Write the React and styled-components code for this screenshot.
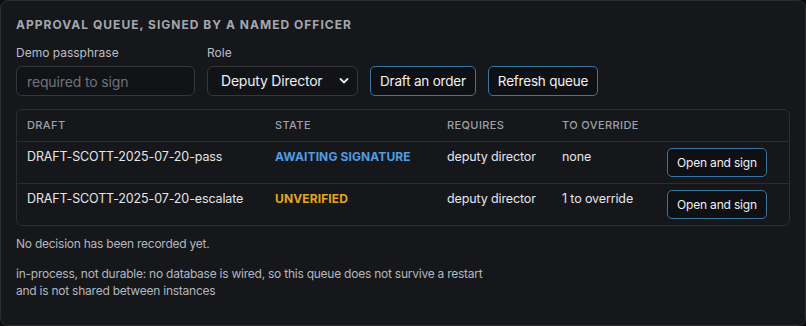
import React from 'react';
import styled, { createGlobalStyle } from 'styled-components';

const GlobalStyle = createGlobalStyle`
  html, body {
    margin: 0;
    padding: 0;
    background: #0c0d0f;
  }
  body {
    font-family: Inter, "Noto Sans", "Liberation Sans", sans-serif;
    color: #e6e7ea;
  }
`;

const Card = styled.section`
  box-sizing: border-box;
  width: 806px;
  height: 326px;
  background: #16171b;
  border: 1px solid #2b2d32;
  border-radius: 8px;
  padding: 16px 15px 0;
`;

const Title = styled.h2`
  margin: 0 0 12px;
  font-size: 12px;
  font-weight: 700;
  letter-spacing: 0.085em;
  text-transform: uppercase;
  color: #a3a7ae;
  line-height: 16px;
`;

const Controls = styled.div`
  display: flex;
  align-items: flex-end;
  gap: 12px;
  margin-bottom: 13px;
`;

const Field = styled.label`
  display: flex;
  flex-direction: column;
  gap: 5px;
  font-size: 12px;
  color: #babec5;
  line-height: 16px;
`;

const TextInput = styled.input`
  box-sizing: border-box;
  width: ${(p) => p.$width}px;
  height: 30px;
  padding: 0 10px;
  background: #121316;
  border: 1px solid #35373c;
  border-radius: 6px;
  color: #e6e7ea;
  font: inherit;
  font-size: 14px;
  letter-spacing: -0.01em;
  &::placeholder { color: #6e727a; }
`;

const SelectWrap = styled.div`
  position: relative;
  width: 151px;
`;

const Select = styled.select`
  box-sizing: border-box;
  width: 100%;
  height: 30px;
  padding: 0 26px 0 13px;
  appearance: none;
  background: #121316;
  border: 1px solid #35373c;
  border-radius: 6px;
  color: #eceef1;
  font: inherit;
  font-size: 14px;
  letter-spacing: -0.015em;
`;

const Chevron = styled.svg`
  position: absolute;
  right: 9px;
  top: 11px;
  pointer-events: none;
`;

const Button = styled.button`
  box-sizing: border-box;
  height: ${(p) => p.$height || 30}px;
  padding: 0 ${(p) => p.$pad || 9}px;
  background: #0f1013;
  border: 1px solid #3a76a4;
  border-radius: 5px;
  color: #eef0f3;
  font: inherit;
  font-size: ${(p) => p.$size || 13.5}px;
  letter-spacing: -0.015em;
  white-space: nowrap;
  cursor: pointer;
`;

const Table = styled.div`
  border: 1px solid #2b2d32;
  border-radius: 6px;
  overflow: hidden;
  margin-bottom: 9px;
`;

const Row = styled.div`
  display: grid;
  grid-template-columns: 248px 172px 115px 105px 1fr;
  align-items: start;
  border-top: ${(p) => (p.$first ? 'none' : '1px solid #2b2d32')};
  min-height: ${(p) => (p.$head ? 31 : 42)}px;
  box-sizing: border-box;
`;

const HeadCell = styled.div`
  padding: 8px 10px 0;
  font-size: 11px;
  font-weight: 500;
  letter-spacing: 0.035em;
  text-transform: uppercase;
  color: #9da1a8;
  line-height: 14px;
`;

const Cell = styled.div`
  padding: 7px 10px 0;
  font-size: 12.5px;
  line-height: 16px;
  letter-spacing: -0.01em;
  color: #e4e6e9;
`;

const State = styled(Cell)`
  font-size: 12px;
  font-weight: 700;
  letter-spacing: 0.01em;
  color: ${(p) => p.$color};
`;

const ActionCell = styled.div`
  padding: 6px 10px 6px;
`;

const Note = styled.p`
  margin: 0 0 ${(p) => p.$gap || 0}px;
  font-size: 12px;
  line-height: 17px;
  letter-spacing: -0.02em;
  color: #b3b7bd;
  max-width: 485px;
`;

const rows = [
  { id: 'DRAFT-SCOTT-2025-07-20-pass', state: 'Awaiting signature', color: '#4f9de0', requires: 'deputy director', override: 'none' },
  { id: 'DRAFT-SCOTT-2025-07-20-escalate', state: 'Unverified', color: '#e6a41f', requires: 'deputy director', override: '1 to override' },
];

export default function App() {
  return (
    <>
      <GlobalStyle />
      <Card>
        <Title>Approval queue, signed by a named officer</Title>
        <Controls>
          <Field>
            Demo passphrase
            <TextInput $width={179} type="password" placeholder="required to sign" />
          </Field>
          <Field as="div">
            Role
            <SelectWrap>
              <Select defaultValue="deputy">
                <option value="deputy">Deputy Director</option>
                <option value="director">Director</option>
                <option value="officer">Officer</option>
              </Select>
              <Chevron width="10" height="8" viewBox="0 0 10 8">
                <path d="M1.5 2 L5 5.5 L8.5 2" fill="none" stroke="#e6e7ea" strokeWidth="1.8" strokeLinecap="round" strokeLinejoin="round" />
              </Chevron>
            </SelectWrap>
          </Field>
          <Button>Draft an order</Button>
          <Button>Refresh queue</Button>
        </Controls>
        <Table>
          <Row $head $first>
            <HeadCell>Draft</HeadCell>
            <HeadCell>State</HeadCell>
            <HeadCell>Requires</HeadCell>
            <HeadCell>To override</HeadCell>
            <HeadCell />
          </Row>
          {rows.map((r) => (
            <Row key={r.id}>
              <Cell>{r.id}</Cell>
              <State $color={r.color}>{r.state.toUpperCase()}</State>
              <Cell>{r.requires}</Cell>
              <Cell>{r.override}</Cell>
              <ActionCell>
                <Button $size={12} $pad={9} $height={29}>Open and sign</Button>
              </ActionCell>
            </Row>
          ))}
        </Table>
        <Note $gap={13}>No decision has been recorded yet.</Note>
        <Note>in-process, not durable: no database is wired, so this queue does not survive a restart and is not shared between instances</Note>
      </Card>
    </>
  );
}
